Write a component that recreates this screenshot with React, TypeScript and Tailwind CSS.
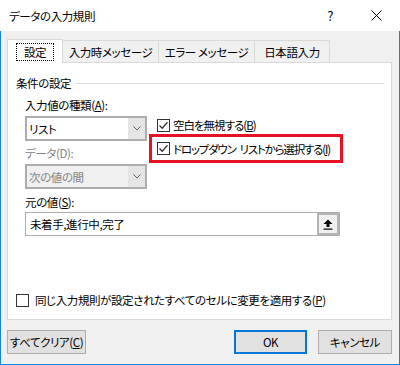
import React from 'react';

const Check: React.FC<{ checked?: boolean }> = ({ checked }) => (
  <span className="w-[13px] h-[13px] shrink-0 bg-white border border-[#333333] flex items-center justify-center">
    {checked && (
      <svg width="11" height="11" viewBox="0 0 11 11">
        <path d="M1.5 5.5 L4.2 8.2 L9.5 2.3" fill="none" stroke="#333333" strokeWidth="1.3" />
      </svg>
    )}
  </span>
);

const Chevron: React.FC = () => (
  <svg width="8" height="5" viewBox="0 0 8 5">
    <path d="M0.5 0.5 L4 4 L7.5 0.5" fill="none" stroke="#606060" strokeWidth="1" />
  </svg>
);

const Combo: React.FC<{ value: string; disabled?: boolean }> = ({ value, disabled }) => (
  <div
    className={`h-[25px] w-[122px] flex border-2 border-[#adadad] ${
      disabled ? 'bg-[#f0f0f0] text-[#838383]' : 'bg-white text-black'
    }`}
  >
    <div className="flex-1 flex items-center pl-[2px]">{value}</div>
    <div className="w-[17px] bg-[#e5e5e5] flex items-center justify-center">
      <Chevron />
    </div>
  </div>
);

const Btn: React.FC<{ children: React.ReactNode; primary?: boolean; w: string }> = ({ children, primary, w }) => (
  <div
    className={`h-[24px] ${w} bg-[#e1e1e1] flex items-center justify-center whitespace-nowrap ${
      primary ? 'border-2 border-[#0078d7]' : 'border border-[#adadad]'
    }`}
  >
    {children}
  </div>
);

const tabs = ['入力時メッセージ', 'エラー メッセージ', '日本語入力'];
const tabWidths = ['w-[97px]', 'w-[97px]', 'w-[76px]'];

export default function App() {
  return (
    <div className="w-[400px] h-[365px] flex flex-col text-[11.5px] tracking-[-0.4px] leading-[16px] text-black whitespace-nowrap [font-family:'Noto_Sans_CJK_JP','Noto_Sans',sans-serif] [font-feature-settings:'palt']">
      <div className="h-[31px] bg-white flex items-center pl-[9px] pr-[18px]">
        <span className="flex-1">データの入力規則</span>
        <span className="mr-[38px] text-[13px]">?</span>
        <svg width="11" height="11" viewBox="0 0 11 11">
          <path d="M0.5 0.5 L10.5 10.5 M10.5 0.5 L0.5 10.5" stroke="#000" strokeWidth="1" />
        </svg>
      </div>

      <div className="flex-1 flex flex-col bg-[#f0f0f0] border-x border-b border-[#1883d7] pl-[6px] pr-[7px] pt-[8px]">
        <div className="flex items-end h-[23px]">
          <div className="relative z-10 -mb-px h-[24px] w-[56px] bg-white border border-b-0 border-[#d9d9d9] flex items-center justify-center">
            <span className="border border-dotted border-black px-[7px] h-[18px] flex items-center">設定</span>
          </div>
          {tabs.map((t, i) => (
            <div
              key={t}
              className={`-ml-px h-[22px] ${tabWidths[i]} border border-b-0 border-[#d9d9d9] flex items-center justify-center`}
            >
              {t}
            </div>
          ))}
        </div>

        <div className="h-[258px] bg-white border border-[#d9d9d9] flex flex-col pl-[8px] pr-[7px] pt-[12px] pb-[11px]">
          <div className="flex items-center">
            <span>条件の設定</span>
            <div className="flex-1 h-px bg-[#dcdcdc] ml-[4px]" />
          </div>

          <div className="ml-[9px] mt-[6px]">
            <div>
              入力値の種類(<span className="underline">A</span>):
            </div>
            <div className="flex items-start mt-[3px]">
              <div className="flex flex-col">
                <Combo value="リスト" />
                <div className="mt-[4px] text-[#838383]">データ(D):</div>
                <div className="mt-[3px]">
                  <Combo value="次の値の間" disabled />
                </div>
              </div>
              <div className="ml-[2px] flex flex-col">
                <div className="h-[16px] flex items-center gap-[3px] pl-[8px] mt-[1px]">
                  <Check checked />
                  <span className="tracking-[-1px]">
                    空白を無視する(<span className="underline">B</span>)
                  </span>
                </div>
                <div className="mt-[1px] h-[29px] w-[194px] border-[3px] border-[#e81123] flex items-center gap-[3px] pl-[5px]">
                  <Check checked />
                  <span className="tracking-[-1.2px]">
                    ドロップダウン<span className="ml-[4px]">リストから選択する(</span>
                    <span className="underline">I</span>)
                  </span>
                </div>
              </div>
            </div>

            <div className="mt-[5px]">
              元の値(<span className="underline">S</span>):
            </div>
            <div className="mt-[2px] h-[24px] w-[315px] flex border border-[#adadad] bg-white">
              <div className="flex-1 flex items-center pl-[4px]">未着手,進行中,完了</div>
              <div className="w-[22px] border-2 border-[#b4b4b4] bg-[#f0f0f0] flex items-center justify-center">
                <svg width="10" height="11" viewBox="0 0 10 11">
                  <path d="M5 0.5 L9.5 5 L6.5 5 L6.5 8 L3.5 8 L3.5 5 L0.5 5 Z" fill="#000" />
                  <rect x="0.5" y="9.5" width="9" height="1.2" fill="#000" />
                </svg>
              </div>
            </div>
          </div>

          <div className="mt-auto flex items-center gap-[6px]">
            <Check />
            <span>
              同じ入力規則が設定されたすべてのセルに変更を適用する(<span className="underline">P</span>)
            </span>
          </div>
        </div>

        <div className="mt-[10px] flex items-center">
          <Btn w="w-[79px]">
            <span>
              すべてクリア(<span className="underline">C</span>)
            </span>
          </Btn>
          <div className="flex-1" />
          <Btn w="w-[73px]" primary>
            OK
          </Btn>
          <div className="w-[11px]" />
          <Btn w="w-[74px]">キャンセル</Btn>
        </div>
      </div>
    </div>
  );
}
